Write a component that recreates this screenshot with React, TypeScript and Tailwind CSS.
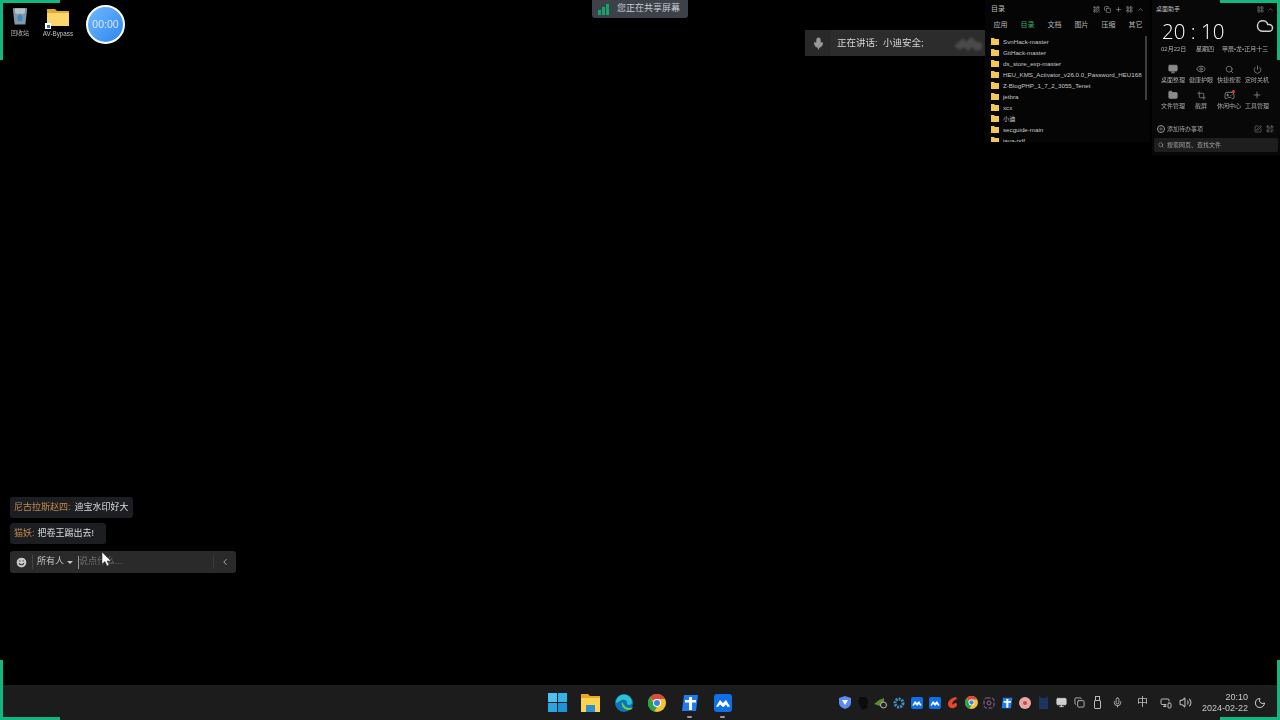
import {
  ChevronLeft,
  ChevronUp,
  Cloud,
  Copy,
  Crop,
  Eye,
  Folder,
  Gamepad2,
  LayoutGrid,
  Mic,
  Moon,
  Monitor,
  MonitorSmartphone,
  Plus,
  Power,
  QrCode,
  Search,
  Smile,
  SquarePen,
  Volume2,
} from 'lucide-react';

const cjk = "font-['Liberation_Sans','Noto_Sans_CJK_SC',sans-serif]";

const tabs = ['应用', '目录', '文档', '图片', '压缩', '其它'];

const folders = [
  'SvnHack-master',
  'GitHack-master',
  'ds_store_exp-master',
  'HEU_KMS_Activator_v26.0.0_Password_HEU168',
  'Z-BlogPHP_1_7_2_3055_Tenet',
  'jetbra',
  'xcx',
  '小迪',
  'secguide-main',
  'java-pdf',
];

const tools = [
  { label: '桌面整理', icon: <Monitor size={10} fill="#8a8a8a" /> },
  { label: '健康护眼', icon: <Eye size={10} /> },
  { label: '快捷搜索', icon: <Search size={9} /> },
  { label: '定时关机', icon: <Power size={9} /> },
  { label: '文件管理', icon: <Folder size={10} fill="#8a8a8a" /> },
  { label: '截屏', icon: <Crop size={9} /> },
  { label: '休闲中心', icon: <Gamepad2 size={11} />, dot: true },
  { label: '工具管理', icon: <Plus size={10} /> },
];

function Corner({ className }: { className: string }) {
  return <div className={`absolute bg-[#12b77f] ${className}`} />;
}

function RecycleBin() {
  return (
    <svg width="18" height="20" viewBox="0 0 20 21">
      <path d="M2 2h16l-2 18H4z" fill="#8296a6" />
      <path d="M4 2h12l-1 6H5z" fill="#b4c2cd" />
      <path d="M7 12l3-4 3 4-1 4H8z" fill="#3f86c4" />
    </svg>
  );
}

function DeskFolder() {
  return (
    <div className="relative">
      <svg width="22" height="18" viewBox="0 0 22 18" className="block">
        <path d="M0 1h8l2 2h12v15H0z" fill="#e5a92f" />
        <path d="M0 5h22v13H0z" fill="#fbd66c" />
      </svg>
      <div className="absolute -left-[2px] bottom-[-3px] w-[6px] h-[6px] bg-white flex items-center justify-center">
        <div className="w-[3px] h-[3px] bg-[#2f6fd0]" />
      </div>
    </div>
  );
}

function SmallFolder() {
  return (
    <svg width="8" height="7" viewBox="0 0 8 7" className="shrink-0">
      <path d="M0 0h3l1 1h4v6H0z" fill="#f4c653" />
    </svg>
  );
}

function WinLogo() {
  return (
    <svg width="19" height="19" viewBox="0 0 19 19">
      <path d="M0 0h9v9H0z" fill="#4cc2ee" />
      <path d="M10 0h9v9h-9z" fill="#38b1e8" />
      <path d="M0 10h9v9H0z" fill="#2aa5e0" />
      <path d="M10 10h9v9h-9z" fill="#1d94d8" />
    </svg>
  );
}

function ExplorerIcon() {
  return (
    <svg width="19" height="18" viewBox="0 0 19 18">
      <path d="M0 0h7l2 2h10v16H0z" fill="#e9a825" />
      <path d="M0 4h19v14H0z" fill="#fdd34f" />
      <path d="M5 11h9v7H5z" fill="#2d8fd0" />
    </svg>
  );
}

function EdgeIcon({ size = 18 }: { size?: number }) {
  return (
    <svg width={size} height={size} viewBox="0 0 18 18">
      <circle cx="9" cy="9" r="9" fill="#0f73b8" />
      <path d="M1 9a8 8 0 0 1 16-1c0 3-4 4-5 2 1-3-2-5-5-4-3 1-5 3-6 3z" fill="#2bc3d2" />
      <path d="M7 8c-1 4 2 8 7 8 2 0 3-1 4-3-3 2-8 1-9-2-1-1-1-2-2-3z" fill="#6fd44d" />
    </svg>
  );
}

function ChromeIcon({ size = 18 }: { size?: number }) {
  return (
    <svg width={size} height={size} viewBox="0 0 18 18">
      <circle cx="9" cy="9" r="9" fill="#f4c430" />
      <path d="M9 0a9 9 0 0 1 8 5H9a4 4 0 0 0-4 2L2 3a9 9 0 0 1 7-3z" fill="#dd4b3e" />
      <path d="M2 3l4 7 3 3-3 4.500A9 9 0 0 1 2 3z" fill="#2ba24c" />
      <circle cx="9" cy="9" r="4" fill="#fff" />
      <circle cx="9" cy="9" r="3" fill="#3b82e0" />
    </svg>
  );
}

function CrossApp({ size = 18 }: { size?: number }) {
  return (
    <svg width={size} height={size} viewBox="0 0 18 18">
      <path d="M3 1h14l-2 16H1z" fill="#1f7cf0" />
      <path d="M8 3h3v3h4v2.500h-4V16H8V8.500H4V6h4z" fill="#fff" />
    </svg>
  );
}

function CloudApp({ size = 18 }: { size?: number }) {
  return (
    <svg width={size} height={size} viewBox="0 0 18 18">
      <rect width="18" height="18" rx="3" fill="#0f6fe8" />
      <path d="M2 12.500L6 6l3 3 3-3 4 6.500-2.500.5L12 10.500 9.500 13 9 13l-3-2.500L4 13z" fill="#fff" />
    </svg>
  );
}

function TaskApp({ children, active }: { children: React.ReactNode; active?: boolean }) {
  return (
    <div className="w-[33px] h-full flex items-center justify-center relative">
      {children}
      {active && <div className="absolute bottom-[2px] w-[5px] h-[2px] rounded-sm bg-[#999]" />}
    </div>
  );
}

function TrayItem({ children, w = 'w-[18px]' }: { children: React.ReactNode; w?: string }) {
  return <div className={`${w} flex items-center justify-center text-[#b8b8b8]`}>{children}</div>;
}

export default function App() {
  return (
    <div className={`w-[1280px] h-[720px] bg-black flex flex-col overflow-hidden relative ${cjk}`}>
      <main className="flex-1 relative blur-[0.4px]">
        {/* desktop icons */}
        <div className="absolute left-[5px] top-[6px] w-[30px] flex flex-col items-center">
          <RecycleBin />
          <span className="text-[6px] text-[#b5b5b5] mt-[2px] leading-[10px]">回收站</span>
        </div>
        <div className="absolute left-[40px] top-[8px] w-[36px] flex flex-col items-center">
          <DeskFolder />
          <span className="text-[6.3px] text-[#c0c0c0] mt-[3px] leading-[10px]">AV-Bypass</span>
        </div>
        <div className="absolute left-[86px] top-[5px] w-[39px] h-[39px] rounded-full border-2 border-white bg-gradient-to-br from-[#6cb8ff] to-[#2f86ee] flex items-center justify-center text-[10.500px] text-[#d8ecff]">
          00:00
        </div>

        {/* sharing pill */}
        <div className="absolute left-[592px] top-0 w-[96px] h-[18px] bg-[#3c414a] rounded-b-[3px] flex items-center pl-[6px] gap-[8px]">
          <div className="flex items-end gap-[1px] h-[11px]">
            <div className="w-[3px] h-[5px] bg-[#16a36b]" />
            <div className="w-[3px] h-[8px] bg-[#16a36b]" />
            <div className="w-[3px] h-[11px] bg-[#16a36b]" />
          </div>
          <span className="text-[9px] text-[#c9ccd1] whitespace-nowrap">您正在共享屏幕</span>
        </div>

        {/* speaking bar */}
        <div className="absolute left-[805px] top-[30px] w-[181px] h-[26px] bg-[#2c2c2c] flex items-center">
          <div className="w-[26px] h-full flex items-center justify-center text-[#999] bg-[#292929]">
            <Mic size={13} fill="#999" />
          </div>
          <span className="ml-[6px] text-[9.500px] text-[#d5d5d5] whitespace-pre">正在讲话:  小迪安全;</span>
          <svg className="ml-auto mr-[2px] blur-[1px]" width="30" height="18" viewBox="0 0 30 18">
            <path d="M0 12l9-8 3 4 5-5 6 5 5 1v6l-6 2-4-4-4 4-4-4-4 3z" fill="#4a4a4a" />
          </svg>
        </div>

        {/* directory widget */}
        <section className="absolute left-[985px] top-0 w-[165px] h-[142px] bg-[#050505] overflow-hidden">
          <div className="h-[18px] flex items-center justify-between px-[6px] text-[#a5a5a5]">
            <span className="text-[7px] text-[#bdbdbd]">目录</span>
            <div className="flex items-center gap-[4px]">
              <QrCode size={7} />
              <Copy size={7} />
              <Plus size={7} />
              <LayoutGrid size={7} />
              <ChevronUp size={7} />
            </div>
          </div>
          <div className="flex h-[14px] items-center pl-[2px]">
            {tabs.map((tab, i) => (
              <span
                key={tab}
                className={`w-[27px] text-center text-[7px] ${i === 1 ? 'text-[#3fae6a]' : 'text-[#b5b5b5]'}`}
              >
                {tab}
              </span>
            ))}
          </div>
          <div className="relative mt-[4px]">
            <ul className="pl-[6px]">
              {folders.map(name => (
                <li key={name} className="flex items-center h-[11px] gap-[4px]">
                  <SmallFolder />
                  <span className="text-[6.200px] text-[#c8c8c8] whitespace-nowrap leading-[11px]">{name}</span>
                </li>
              ))}
            </ul>
            <div className="absolute left-[160px] top-0 w-[2px] h-[64px] bg-[#3d3d3d]" />
          </div>
        </section>

        {/* assistant widget */}
        <section className="absolute left-[1152px] top-0 w-[128px] h-[155px] bg-[#080808] px-[6px] text-[#a8a8a8]">
          <div className="h-[18px] flex items-center justify-between text-[#8a8a8a]">
            <span className="text-[6px] text-[#bdbdbd] -ml-[2px]">桌面助手</span>
            <div className="flex gap-[3px]">
              <LayoutGrid size={7} />
              <ChevronUp size={7} />
            </div>
          </div>
          <div className="flex justify-between h-[26px] pl-[4px]">
            <span className="text-[20.500px] font-light font-['Open_Sans','Liberation_Sans',sans-serif] leading-[26px] text-white whitespace-pre">
              20 : 10
            </span>
            <Cloud size={18} className="text-[#d0d0d0] mt-[-1px]" />
          </div>
          <div className="flex text-[6px] text-[#b0b0b0] pl-[3px] leading-[10px]">
            <span className="w-[35px]">02月22日</span>
            <span className="w-[26px]">星期四</span>
            <span>甲辰•龙•正月十三</span>
          </div>
          <div className="grid grid-cols-4 w-[112px] ml-[1px] mt-[9px] gap-y-[4px]">
            {tools.map(tool => (
              <div key={tool.label} className="flex flex-col items-center h-[22px] relative text-[#8a8a8a]">
                <div className="h-[12px] flex items-center">{tool.icon}</div>
                <span className="text-[6px] leading-[10px] whitespace-nowrap text-[#a8a8a8]">{tool.label}</span>
                {tool.dot && <div className="absolute top-[1px] left-[17px] w-[3px] h-[3px] rounded-full bg-[#e33]" />}
              </div>
            ))}
          </div>
          <div className="flex items-center justify-between mt-[12px] h-[12px]">
            <div className="flex items-center gap-[2px] -ml-[1px]">
              <Plus size={8} className="rounded-full border-[0.5px] border-[#999]" />
              <span className="text-[6px] text-[#a0a0a0]">添加待办事项</span>
            </div>
            <div className="flex gap-[4px] text-[#777]">
              <SquarePen size={8} />
              <QrCode size={8} />
            </div>
          </div>
          <div className="-mx-[4px] mt-[3px] h-[14px] rounded-[2px] bg-[#1e1e1e] flex items-center gap-[3px] px-[4px]">
            <Search size={6} />
            <span className="text-[6px] text-[#a0a0a0]">搜索网页、查找文件</span>
          </div>
        </section>

        {/* chat */}
        <div className="absolute left-[10px] top-[497px] flex flex-col items-start">
          <div className="h-[21px] px-[4px] w-[123px] rounded-[3px] bg-[#1c1e22] flex items-center text-[9px] whitespace-nowrap">
            <span className="text-[#c08a4e]">尼古拉斯赵四:</span>
            <span className="ml-[4px] text-[#dcdcdc]">迪宝水印好大</span>
          </div>
          <div className="h-[21px] px-[4px] w-[96px] mt-[5px] rounded-[3px] bg-[#1c1e22] flex items-center text-[9px] whitespace-nowrap">
            <span className="text-[#c08a4e]">猫妖:</span>
            <span className="ml-[3px] text-[#dcdcdc]">把卷王踢出去!</span>
          </div>
          <div className="h-[22px] w-[226px] mt-[7px] rounded-[3px] bg-[#2a2a2a] flex items-center text-[9px] relative">
            <Smile size={13} className="ml-[5px] text-[#2a2a2a]" fill="#c9c9c9" />
            <div className="ml-[4px] w-px h-[14px] bg-[#444]" />
            <span className="ml-[4px] text-[#c4c4c4]">所有人</span>
            <span className="ml-[3px] w-0 h-0 border-x-[3px] border-x-transparent border-t-[3px] border-t-[#c4c4c4]" />
            <div className="ml-[5px] w-px h-[13px] bg-[#999]" />
            <span className="text-[#6f6f6f]">说点什么...</span>
            <div className="ml-auto w-px h-[14px] bg-[#3a3a3a]" />
            <ChevronLeft size={10} className="mx-[6px] text-[#c4c4c4]" />
            <svg className="absolute left-[91px] top-[1px]" width="10" height="15" viewBox="0 0 10 15">
              <path d="M1 0v12l3-2.500 2 4.500 2-1-2-4h4z" fill="#fff" stroke="#222" strokeWidth="0.5" />
            </svg>
          </div>
        </div>
      </main>

      {/* taskbar */}
      <footer className="h-[35px] shrink-0 bg-[#1c1c1c] flex items-center blur-[0.4px]">
        <div className="ml-[541px] flex h-full">
          <TaskApp><WinLogo /></TaskApp>
          <TaskApp><ExplorerIcon /></TaskApp>
          <TaskApp><EdgeIcon /></TaskApp>
          <TaskApp><ChromeIcon /></TaskApp>
          <TaskApp active><CrossApp /></TaskApp>
          <TaskApp active><CloudApp /></TaskApp>
        </div>
        <div className="ml-[97px] flex items-center">
          <TrayItem>
            <svg width="12" height="13" viewBox="0 0 12 13">
              <path d="M6 0l6 2v5c0 3-3 5-6 6-3-1-6-3-6-6V2z" fill="#5b8def" />
              <path d="M3 4h6L6 9z" fill="#fff" />
            </svg>
          </TrayItem>
          <TrayItem>
            <svg width="10" height="14" viewBox="0 0 10 14">
              <path d="M2 1h6l2 3-1 8-4 2-3-3-2-6z" fill="#0c0c0c" />
            </svg>
          </TrayItem>
          <TrayItem>
            <svg width="14" height="13" viewBox="0 0 14 13">
              <path d="M0 8l5-4 5-2v5l-4 3z" fill="#5d8a2c" />
              <circle cx="9.500" cy="9" r="3" fill="#222" stroke="#bbb" />
            </svg>
          </TrayItem>
          <TrayItem>
            <svg width="12" height="12" viewBox="0 0 12 12">
              <circle cx="6" cy="6" r="4" fill="none" stroke="#3f8fc4" strokeWidth="3" strokeDasharray="2 1" />
            </svg>
          </TrayItem>
          <TrayItem><CloudApp size={12} /></TrayItem>
          <TrayItem><CloudApp size={12} /></TrayItem>
          <TrayItem>
            <svg width="12" height="13" viewBox="0 0 12 13">
              <path d="M9 1C4 2 1 5 1 8c0 3 3 5 6 4 3-1 4-4 2-5-2 0-3 1-4 2 0-3 2-5 5-6z" fill="#e5482a" />
            </svg>
          </TrayItem>
          <TrayItem><ChromeIcon size={13} /></TrayItem>
          <TrayItem>
            <svg width="12" height="12" viewBox="0 0 12 12" fill="none" stroke="#8a6a9a">
              <rect x="1" y="1" width="10" height="10" rx="2.500" strokeDasharray="4 1.500" />
              <circle cx="6" cy="6" r="2" />
            </svg>
          </TrayItem>
          <TrayItem><CrossApp size={12} /></TrayItem>
          <TrayItem>
            <svg width="12" height="12" viewBox="0 0 12 12">
              <circle cx="6" cy="6" r="6" fill="#e8a8a8" />
              <circle cx="6" cy="6" r="2" fill="#c04b4b" />
            </svg>
          </TrayItem>
          <TrayItem>
            <svg width="11" height="13" viewBox="0 0 11 13">
              <path d="M1 0l2 2h5l2-2v13H1z" fill="#1c3560" />
            </svg>
          </TrayItem>
          <TrayItem><Monitor size={11} fill="#cfcfcf" className="text-[#cfcfcf]" /></TrayItem>
          <TrayItem><Copy size={11} /></TrayItem>
          <TrayItem>
            <svg width="9" height="13" viewBox="0 0 9 13" fill="none" stroke="#b8b8b8">
              <rect x="1.500" y="4.500" width="6" height="8" rx="0.500" />
              <rect x="2.500" y="0.500" width="4" height="4" />
            </svg>
          </TrayItem>
          <TrayItem w="w-[23px]"><Mic size={11} /></TrayItem>
          <TrayItem w="w-[27px]"><span className="text-[11px]">中</span></TrayItem>
          <TrayItem w="w-[20px]"><MonitorSmartphone size={12} /></TrayItem>
          <TrayItem><Volume2 size={13} /></TrayItem>
        </div>
        <div className="ml-[8px] w-[46px] text-right text-[9px] leading-[11px] text-[#c8c8c8] whitespace-nowrap">
          <div>20:10</div>
          <div>2024-02-22</div>
        </div>
        <Moon size={12} className="ml-[6px] text-[#d0d0d0]" />
      </footer>

      {/* corner marks */}
      <Corner className="left-0 top-0 w-[60px] h-[3px]" />
      <Corner className="left-0 top-0 w-[3px] h-[60px]" />
      <Corner className="right-0 top-0 w-[60px] h-[3px]" />
      <Corner className="right-0 top-0 w-[3px] h-[60px]" />
      <Corner className="left-0 bottom-0 w-[60px] h-[3px]" />
      <Corner className="left-0 bottom-0 w-[3px] h-[60px]" />
      <Corner className="right-0 bottom-0 w-[60px] h-[3px]" />
      <Corner className="right-0 bottom-0 w-[3px] h-[60px]" />
    </div>
  );
}
